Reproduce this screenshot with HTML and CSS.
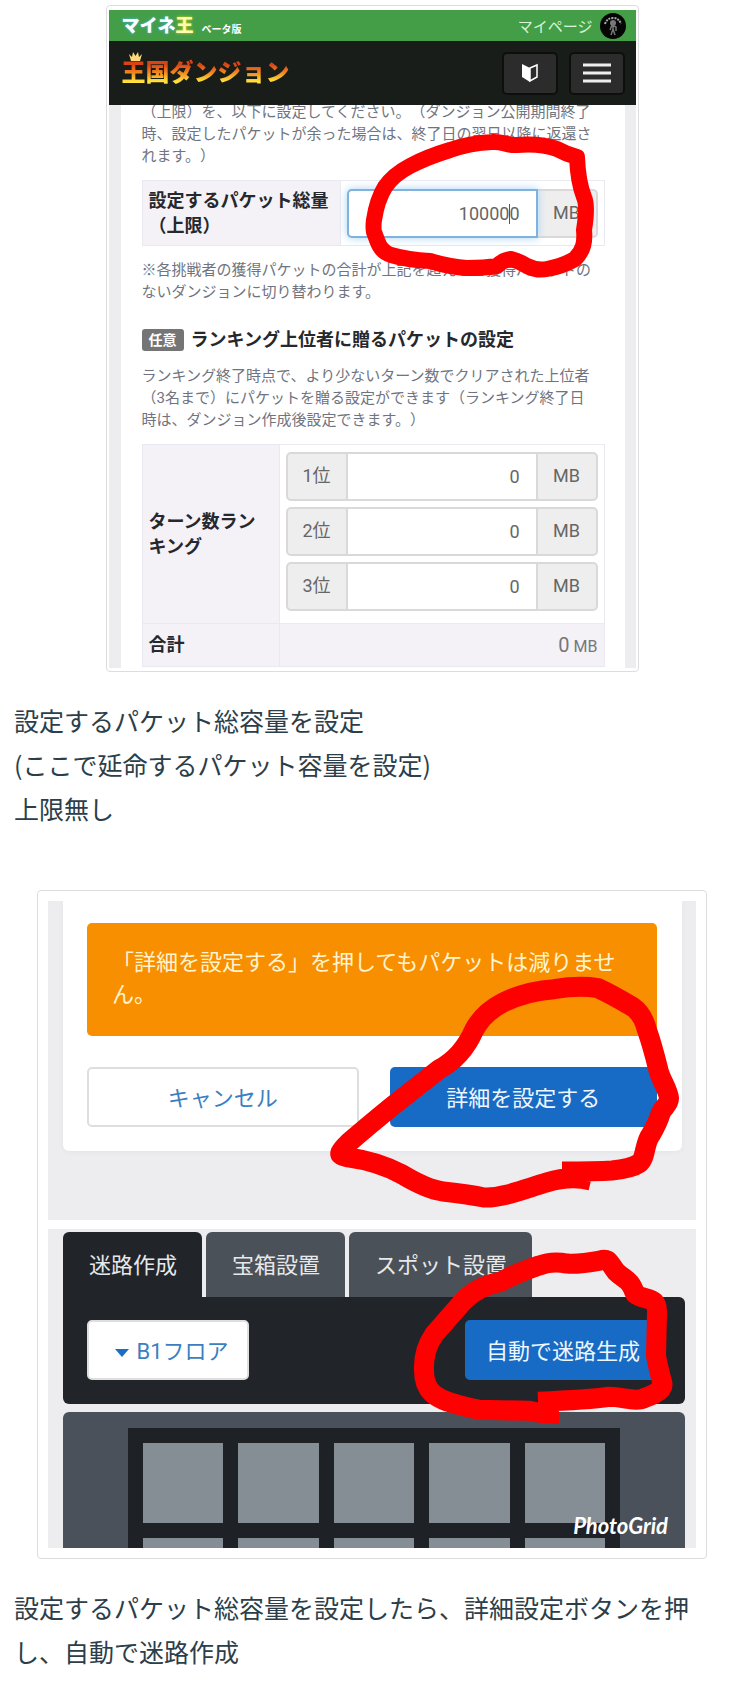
FILE: index.html
```html
<!DOCTYPE html>
<html lang="ja">
<head>
  <meta charset="UTF-8">
  <meta name="viewport" content="width=device-width, initial-scale=1.0">
  <title>パケット総容量の設定</title>
  <link rel="stylesheet" href="styles.css">
</head>
<body>
  <article class="article">
    <figure class="shot shot-packet">
      <div class="screen">
        <div class="topbar">
          <a class="brand" href="#"><span class="brand-name">マイネ<em>王</em></span><small>ベータ版</small></a>
          <a class="mypage" href="#">マイページ
            <svg class="avatar" viewBox="0 0 26 26" aria-hidden="true">
              <circle cx="13" cy="13" r="13" fill="#050505"/>
              <path d="M5 11Q7 5 13 5T21 11" fill="none" stroke="#aaa" stroke-width="2" stroke-dasharray="2 1"/>
              <circle cx="13" cy="10" r="3" fill="#777"/>
              <path d="M13 11V16L11 22M13 16L15 22M10 17L12 12L16 14V18" fill="none" stroke="#777" stroke-width="1.5"/>
            </svg>
          </a>
        </div>
        <div class="navbar">
          <div class="logo">
            <svg class="crown" viewBox="0 0 15 11" aria-hidden="true">
              <path d="M1 3L4 6L5 1L7.500 5L10 1L11 6L14 3L12 10H3Z" fill="#ffd97a"/>
            </svg>
            <span>王国ダンジョン</span>
          </div>
          <button class="nav-button" type="button" aria-label="ガイド">
            <svg width="16" height="20" viewBox="0 0 16 20">
              <path d="M0 1L8 5V19L0 14Z" fill="#fff"/>
              <path d="M8 5L15 2V14L8 18Z" fill="none" stroke="#fff" stroke-width="1.500"/>
            </svg>
          </button>
          <button class="nav-button" type="button" aria-label="メニュー">
            <svg width="30" height="20" viewBox="0 0 30 20">
              <path d="M1 2H29M1 10H29M1 18H29" stroke="#eee" stroke-width="3"/>
            </svg>
          </button>
        </div>

        <div class="form">
          <p>（上限）を、以下に設定してください。（ダンジョン公開期間終了時、設定したパケットが余った場合は、終了日の翌日以降に返還されます。）</p>
          <table class="settings settings-total">
            <tr>
              <th><label for="total">設定するパケット総量（上限）</label></th>
              <td>
                <div class="group focused">
                  <input id="total" type="text" value="100000">
                  <span class="caret"></span>
                  <span class="unit">MB</span>
                </div>
              </td>
            </tr>
          </table>
          <p>※各挑戦者の獲得パケットの合計が上記を超えると獲得パケットのないダンジョンに切り替わります。</p>

          <h2><span class="badge">任意</span>ランキング上位者に贈るパケットの設定</h2>
          <p>ランキング終了時点で、より少ないターン数でクリアされた上位者（3名まで）にパケットを贈る設定ができます（ランキング終了日時は、ダンジョン作成後設定できます。）</p>
          <table class="settings settings-rank">
            <tr>
              <th>ターン数ランキング</th>
              <td class="ranks">
                <div class="group">
                  <label class="unit" for="rank1">1位</label>
                  <input id="rank1" type="text" value="0">
                  <span class="unit">MB</span>
                </div>
                <div class="group">
                  <label class="unit" for="rank2">2位</label>
                  <input id="rank2" type="text" value="0">
                  <span class="unit">MB</span>
                </div>
                <div class="group">
                  <label class="unit" for="rank3">3位</label>
                  <input id="rank3" type="text" value="0">
                  <span class="unit">MB</span>
                </div>
              </td>
            </tr>
            <tr class="sum">
              <th>合計</th>
              <td><b>0</b> MB</td>
            </tr>
          </table>
        </div>

        <svg class="marker" viewBox="109 10 527 658" preserveAspectRatio="none" aria-hidden="true">
          <path stroke-width="16" d="M517 145C507 146 503 141 492 142Q470 143 450 150Q427 157 410 166Q393 175 385 187Q377 200 374 220Q373 227 374 232C378 242 379 251 391 255Q408 260 430 261Q450 267 467 268Q485 268 497 266Q503 260 511 259Q519 261 527 266Q537 271 547 269Q563 266 575 259C584 250 585 241 584 230Q588 206 584 197Q578 182 577 157Q566 154 557 149Q540 143 517 145Z"/>
        </svg>
      </div>
    </figure>

    <p class="caption">設定するパケット総容量を設定<br>(ここで延命するパケット容量を設定)<br>上限無し</p>

    <figure class="shot shot-maze">
      <div class="screen">
        <div class="confirm">
          <div class="card">
            <p class="alert">「詳細を設定する」を押してもパケットは減りません。</p>
            <div class="actions">
              <button class="button" type="button">キャンセル</button>
              <button class="button primary" type="button">詳細を設定する</button>
            </div>
          </div>
        </div>

        <div class="editor">
          <div class="tabs">
            <button class="tab active" type="button">迷路作成</button>
            <button class="tab" type="button">宝箱設置</button>
            <button class="tab" type="button">スポット設置</button>
          </div>
          <div class="toolbar">
            <button class="button floor" type="button">
              <svg width="14" height="8" viewBox="0 0 14 8" aria-hidden="true"><path d="M0 0H14L7 8Z" fill="#1b6ec2"/></svg>B1フロア
            </button>
            <button class="button primary generate" type="button">自動で迷路生成</button>
          </div>
          <div class="board">
            <div class="maze">
              <i></i><i></i><i></i><i></i><i></i>
              <i></i><i></i><i></i><i></i><i></i>
            </div>
          </div>
        </div>

        <span class="watermark">PhotoGrid</span>
        <svg class="marker" viewBox="49 901 648 646" preserveAspectRatio="none" aria-hidden="true">
          <path stroke-width="20" d="M563 1171Q597 1171 613 1170Q633 1168 640 1163C647 1158 645 1143 652 1134Q659 1122 662 1112C665 1106 670 1104 670 1098C669 1088 661 1079 659 1068Q653 1044 648 1030Q644 1014 634 1007Q614 995 599 988Q580 985 555 989Q526 991 503 1003Q484 1013 475 1030Q463 1057 440 1069L393 1106Q366 1128 350 1142C339 1153 338 1155 349 1157Q379 1161 403 1174Q428 1189 444 1191Q471 1194 485 1197C503 1198 527 1188 548 1182Q571 1175 592 1180"/>
          <path stroke-width="20" d="M539 1401Q590 1399 610 1396C624 1396 637 1402 646 1397Q666 1390 663 1381Q659 1366 657 1355L658 1313C659 1294 646 1301 636 1293C631 1278 625 1279 617 1271C610 1262 610 1257 601 1260Q579 1264 568 1263Q553 1260 540 1265Q514 1274 502 1281Q477 1286 463 1302L435 1334Q424 1350 425 1370C425 1391 438 1397 449 1401Q468 1407 481 1409L530 1410Q543 1413 560 1413"/>
        </svg>
      </div>
    </figure>

    <p class="caption">設定するパケット総容量を設定したら、詳細設定ボタンを押し、自動で迷路作成</p>
  </article>
</body>
</html>
```
FILE: styles.css
```css
* {
  box-sizing: border-box;
}
body {
  margin: 0;
  background-color: #fff;
  font-family: Roboto, "Noto Sans CJK JP", sans-serif;
  text-spacing-trim: space-all;
}
button,
input {
  font-family: inherit;
  margin: 0;
}
a {
  text-decoration: none;
}
.article {
  display: flow-root;
  padding: 0 5px 12px 14px;
}
.caption {
  margin: 26px 0 60px;
  font-family: "Noto Sans CJK JP", sans-serif;
  font-size: 25px;
  line-height: 44px;
  color: #2b3e4a;
}
.caption:last-child {
  margin-bottom: 0;
}

/* framed screenshots */
.shot {
  margin: 0 auto;
  border: 1px solid #ddd;
  border-radius: 4px;
}
.shot-packet {
  max-width: 533px;
  margin-top: 5px;
  padding: 4px 2px 3px;
}
.shot-maze {
  max-width: 670px;
  padding: 10px;
}
.screen {
  position: relative;
  overflow: hidden;
  background-color: #ededef;
}
.marker {
  position: absolute;
  top: 0;
  left: 0;
  width: 100%;
  height: 100%;
  pointer-events: none;
}
.marker path {
  fill: none;
  stroke: #f00;
  stroke-linejoin: round;
}

/* header */
.topbar {
  display: flex;
  justify-content: space-between;
  align-items: center;
  height: 31px;
  padding: 0 10px 0 13px;
  background-color: #449e48;
}
.brand {
  display: flex;
  align-items: flex-end;
  gap: 8px;
  color: #fff;
  font-weight: 700;
}
.brand-name {
  font-size: 18px;
  line-height: 26px;
  font-weight: 900;
  text-shadow: 0 0 3px #3bb9e8;
}
.brand-name em {
  font-style: normal;
  color: #fffbb0;
  text-shadow: 0 0 3px #e8d800;
}
.brand small {
  font-size: 10px;
  line-height: 18px;
}
.mypage {
  display: flex;
  align-items: center;
  gap: 7px;
  color: #d5f5d6;
  font-size: 15px;
}
.avatar {
  width: 26px;
  height: 26px;
}
.navbar {
  position: relative;
  display: flex;
  align-items: center;
  gap: 11px;
  height: 64px;
  padding: 0 11px 0 13px;
  background-color: #191d19;
}
.logo {
  position: relative;
  flex: 1;
}
.logo span {
  font-size: 24px;
  line-height: 32px;
  font-weight: 900;
  color: transparent;
  background: linear-gradient(#d94416 20%, #f28a1e 50%, #ffe23c 80%);
  background-clip: text;
  -webkit-background-clip: text;
}
.crown {
  position: absolute;
  top: -6px;
  left: 6px;
  width: 15px;
  height: 11px;
}
.nav-button {
  display: flex;
  justify-content: center;
  align-items: center;
  width: 56px;
  height: 43px;
  padding: 0;
  border: 2px solid #0d0f0d;
  border-radius: 5px;
  background-color: #2b2c2b;
}

/* packet form */
.form {
  margin: -4px 11px 0 12px;
  padding: 0 20px 1px 21px;
  background-color: #fff;
}
.form p {
  margin: 0 0 13px;
  padding-right: 8px;
  font-size: 15px;
  line-height: 22px;
  color: #6f7480;
}
.form h2 {
  display: flex;
  align-items: center;
  gap: 7px;
  margin: 24px 0 12px;
  font-size: 18px;
  line-height: 26px;
  color: #25282c;
}
.badge {
  padding: 0 7px;
  border-radius: 3px;
  background-color: #757575;
  color: #fff;
  font-size: 14px;
  line-height: 22px;
}
.settings {
  width: 100%;
  margin-bottom: 13px;
  border-collapse: collapse;
  table-layout: fixed;
}
.settings-rank {
  margin-bottom: 0;
}
.settings th,
.settings td {
  padding: 7px 6px;
  border: 1px solid #e9e9f1;
}
.settings th {
  background-color: #f5f2f7;
  font-size: 18px;
  line-height: 25px;
  text-align: left;
  color: #25282c;
}
.settings-total th {
  width: 198px;
}
.settings-rank th {
  width: 137px;
}
.settings .ranks {
  padding-bottom: 12px;
}
.group {
  position: relative;
  display: flex;
  height: 49px;
  border: 2px solid #dad8d8;
  border-radius: 5px;
  background-color: #eee;
}
.group + .group {
  margin-top: 6px;
}
.group input {
  flex: 1;
  min-width: 0;
  padding: 0 16px;
  border: 0 solid #dad8d8;
  border-width: 0 2px;
  background-color: #fff;
  color: #666;
  font-size: 18px;
  text-align: right;
}
.unit {
  width: 58px;
  font-size: 18px;
  line-height: 43px;
  text-align: center;
  color: #666;
}
.focused {
  border-left: 0;
}
.focused input {
  margin: -2px 0;
  border: 2px solid #7fb2dc;
  border-radius: 5px 0 0 5px;
  box-shadow: 0 0 8px #a9d3f5;
}
.caret {
  position: absolute;
  top: 13px;
  right: 86px;
  width: 1px;
  height: 20px;
  background-color: #555;
}
.settings .sum td {
  background-color: #f5f2f7;
  color: #74777b;
  font-size: 16px;
  text-align: right;
}
.settings .sum th {
  line-height: 28px;
}
.sum b {
  font-size: 20px;
  font-weight: 400;
}

/* confirm dialog */
.confirm {
  padding: 0 14px 69px 15px;
  border-bottom: 9px solid #fff;
}
.card {
  padding: 22px 25px 24px 24px;
  border-radius: 0 0 6px 6px;
  background-color: #fff;
  box-shadow: 0 1px 4px #e2e4ea;
}
.alert {
  margin: 0 0 31px;
  padding: 24px 25px 25px;
  border-radius: 5px;
  background-color: #f78f00;
  color: #fff3d0;
  font-size: 22px;
  line-height: 32px;
}
.actions {
  display: flex;
  gap: 31px;
}
.button {
  flex: 1;
  height: 60px;
  padding: 0 0 3px;
  border: 2px solid #dededf;
  border-radius: 5px;
  background-color: #fff;
  color: #3b7fc0;
  font-size: 22px;
}
.primary {
  border: 0;
  background-color: #186bc4;
  color: #eef7ff;
}

/* maze editor */
.editor {
  height: 319px;
  padding: 3px 11px 0 15px;
}
.tabs {
  display: flex;
  gap: 4px;
}
.tab {
  height: 65px;
  padding: 0 25px 3px 26px;
  border: 0;
  border-radius: 6px 6px 0 0;
  background-color: #4a5158;
  color: #e6e8ea;
  font-size: 22px;
}
.tab.active {
  background-color: #212429;
}
.toolbar {
  display: flex;
  justify-content: space-between;
  margin-bottom: 8px;
  padding: 23px 24px 24px;
  border-radius: 0 6px 6px 6px;
  background-color: #212429;
}
.floor {
  flex: none;
  width: 162px;
  padding-left: 8px;
}
.floor svg {
  margin-right: 7px;
  vertical-align: middle;
}
.generate {
  flex: none;
  width: 196px;
}
.board {
  height: 160px;
  padding: 16px 65px 0;
  border-radius: 6px 6px 0 0;
  background-color: #4b515b;
}
.maze {
  display: grid;
  grid-template-columns: repeat(5, 1fr);
  gap: 15px;
  padding: 15px 15px 0;
  background-color: #1e2126;
}
.maze i {
  height: 80px;
  background-color: #868e95;
}
.watermark {
  position: absolute;
  right: 28px;
  bottom: 9px;
  color: #fff;
  font-family: Lato, sans-serif;
  font-size: 22px;
  line-height: 26px;
  font-style: italic;
  font-weight: 700;
}
```
